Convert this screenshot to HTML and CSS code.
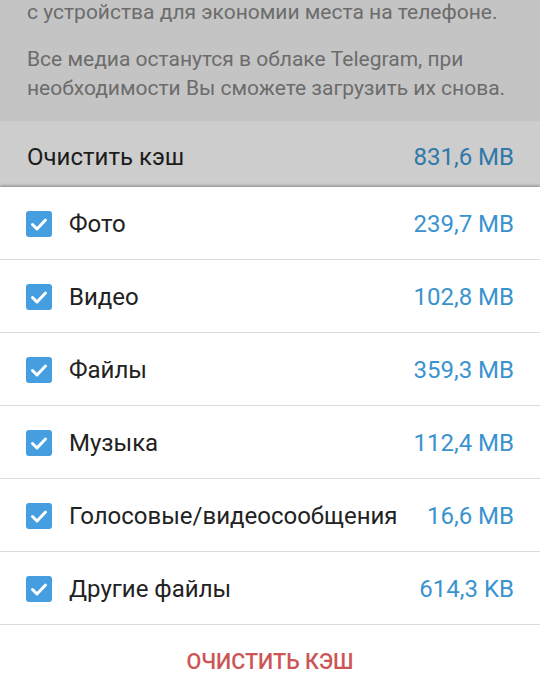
FILE: index.html
```html
<!DOCTYPE html>
<html lang="ru">
<head>
    <meta charset="UTF-8">
    <meta name="viewport" content="width=device-width, initial-scale=1.0">
    <title>Очистить кэш</title>
    <link rel="stylesheet" href="styles.css">
</head>
<body>
    <section class="backdrop">
        <div class="info">
            <p class="info-tail">с устройства для экономии места на телефоне.</p>
            <p>Все медиа останутся в облаке Telegram, при необходимости Вы сможете загрузить их снова.</p>
        </div>
        <div class="summary">
            <span class="summary-title">Очистить кэш</span>
            <span class="size">831,6 MB</span>
        </div>
    </section>

    <section class="sheet">
        <ul class="cache-list">
            <li class="cache-item">
                <span class="check"><svg viewBox="0 0 26 26"><path d="M6.5 13.5l4.5 4.5 8.5-9"/></svg></span>
                <span class="label">Фото</span>
                <span class="size">239,7 MB</span>
            </li>
            <li class="cache-item">
                <span class="check"><svg viewBox="0 0 26 26"><path d="M6.5 13.5l4.5 4.5 8.5-9"/></svg></span>
                <span class="label">Видео</span>
                <span class="size">102,8 MB</span>
            </li>
            <li class="cache-item">
                <span class="check"><svg viewBox="0 0 26 26"><path d="M6.5 13.5l4.5 4.5 8.5-9"/></svg></span>
                <span class="label">Файлы</span>
                <span class="size">359,3 MB</span>
            </li>
            <li class="cache-item">
                <span class="check"><svg viewBox="0 0 26 26"><path d="M6.5 13.5l4.5 4.5 8.5-9"/></svg></span>
                <span class="label">Музыка</span>
                <span class="size">112,4 MB</span>
            </li>
            <li class="cache-item">
                <span class="check"><svg viewBox="0 0 26 26"><path d="M6.5 13.5l4.5 4.5 8.5-9"/></svg></span>
                <span class="label">Голосовые/видеосообщения</span>
                <span class="size">16,6 MB</span>
            </li>
            <li class="cache-item">
                <span class="check"><svg viewBox="0 0 26 26"><path d="M6.5 13.5l4.5 4.5 8.5-9"/></svg></span>
                <span class="label">Другие файлы</span>
                <span class="size">614,3 KB</span>
            </li>
        </ul>
        <button class="clear-btn">Очистить кэш</button>
    </section>
</body>
</html>
```

FILE: styles.css
```css
html, body {
    margin: 0;
    padding: 0;
    height: 100%;
    overflow: hidden;
}
body {
    font-family: Roboto, "Liberation Sans", sans-serif;
    background: #fff;
    color: #222;
}
.backdrop {
    background: #c4c4c4;
}
.info {
    padding: 0 27px 18px;
    color: #6c6c6c;
    font-size: 21px;
    line-height: 29px;
}
.info p {
    margin: 18px 0 0;
}
.info .info-tail {
    margin-top: -2px;
}
.summary {
    display: flex;
    align-items: center;
    justify-content: space-between;
    box-sizing: border-box;
    height: 66px;
    padding: 6px 26px 0 27px;
    background: #cdcdcd;
    font-size: 24px;
    color: #1c1c1c;
}
.summary .size {
    color: #2f78a8;
}
.sheet {
    position: relative;
    background: #fff;
    box-shadow: 0 -1px 3px rgba(0, 0, 0, 0.35);
}
.cache-list {
    list-style: none;
    margin: 0;
    padding: 0;
}
.cache-item {
    display: flex;
    align-items: center;
    box-sizing: border-box;
    height: 73px;
    padding: 2px 26px 0;
    border-bottom: 1px solid #dadada;
    font-size: 24px;
}
.check {
    display: flex;
    width: 26px;
    height: 26px;
    border-radius: 3px;
    background: #449ee0;
    margin-right: 17px;
    flex-shrink: 0;
}
.check svg {
    width: 26px;
    height: 26px;
    fill: none;
    stroke: #fff;
    stroke-width: 3;
    stroke-linecap: round;
    stroke-linejoin: round;
}
.label {
    flex: 1;
    color: #222;
}
.size {
    color: #3a93cf;
}
.clear-btn {
    display: block;
    width: 100%;
    height: 72px;
    border: none;
    background: #fff;
    font-family: inherit;
    font-size: 21.5px;
    font-weight: 500;
    text-transform: uppercase;
    color: #cc5656;
    cursor: pointer;
}
```
